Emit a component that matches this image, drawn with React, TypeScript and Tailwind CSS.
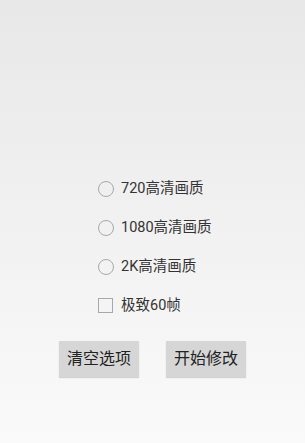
import { useState } from "react";

const options = ["720高清画质", "1080高清画质", "2K高清画质"];

export default function App() {
  const [picked, setPicked] = useState<number | null>(null);
  const [fps, setFps] = useState(false);

  return (
    <div
      className="flex h-[443px] w-[305px] flex-col items-center bg-gradient-to-b from-[#e8e8e8] to-[#fafafa] text-[#333]"
      style={{ fontFamily: '"Roboto", "Noto Sans CJK SC", sans-serif' }}
    >
      <div className="mt-[169px] flex w-full flex-col pl-[98px]">
        {options.map((label, i) => (
          <button
            key={label}
            onClick={() => setPicked(i)}
            className="flex h-[39px] items-center gap-[7px] text-left"
          >
            <span className="flex h-[16px] w-[16px] items-center justify-center rounded-full border-[1.5px] border-[#a8a8a8]">
              {picked === i && <span className="h-[8px] w-[8px] rounded-full bg-[#33b5e5]" />}
            </span>
            <span className="text-[14.5px]">{label}</span>
          </button>
        ))}
        <button
          onClick={() => setFps(!fps)}
          className="flex h-[39px] items-center gap-[8px] text-left"
        >
          <span className="flex h-[15px] w-[15px] items-center justify-center border-[1.5px] border-[#a8a8a8]">
            {fps && <span className="h-[7px] w-[7px] bg-[#33b5e5]" />}
          </span>
          <span className="text-[14.5px]">极致60帧</span>
        </button>
      </div>

      <div className="mt-[16px] flex gap-[27px]">
        <button className="h-[36px] w-[80px] bg-[#d6d6d6] text-[16px] text-[#222] shadow-[0_1px_1px_rgba(0,0,0,0.15)]">
          清空选项
        </button>
        <button className="h-[36px] w-[80px] bg-[#d6d6d6] text-[16px] text-[#222] shadow-[0_1px_1px_rgba(0,0,0,0.15)]">
          开始修改
        </button>
      </div>
    </div>
  );
}
